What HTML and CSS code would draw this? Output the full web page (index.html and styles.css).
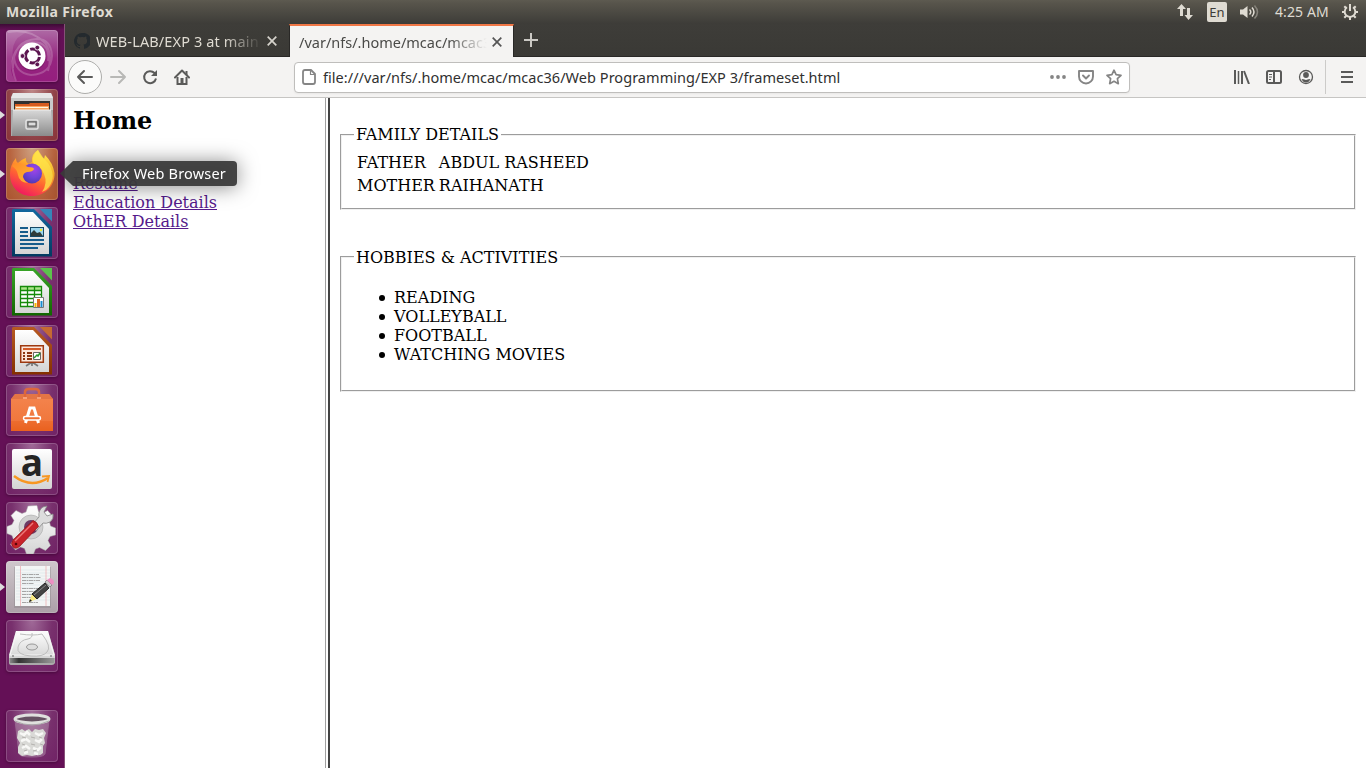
FILE: index.html
```
<!DOCTYPE html>
<html lang="en">
<head>
<meta charset="utf-8">
<title>Mozilla Firefox</title>
<link rel="stylesheet" href="styles.css">
</head>
<body>
<svg width="0" height="0" class="defs">
  <defs>
    <linearGradient id="white" x1="0" y1="0" x2="0" y2="1"><stop offset="0" stop-color="#fff"/><stop offset="1" stop-color="#d4d4d4"/></linearGradient>
    <linearGradient id="metal" x1="0" y1="0" x2="0" y2="1"><stop offset="0" stop-color="#d8d8d8"/><stop offset="1" stop-color="#8b8b8b"/></linearGradient>
    <linearGradient id="dark" x1="0" y1="0" x2="1" y2="0"><stop offset="0" stop-color="#888"/><stop offset=".2" stop-color="#333"/><stop offset="1" stop-color="#999"/></linearGradient>
    <linearGradient id="fox" x1=".8" y1="0" x2=".3" y2="1"><stop offset="0" stop-color="#fff14f"/><stop offset=".35" stop-color="#ffb52a"/><stop offset=".65" stop-color="#ff6432"/><stop offset="1" stop-color="#f01662"/></linearGradient>
    <linearGradient id="foxhead" x1="0" y1="0" x2="1" y2="1"><stop offset="0" stop-color="#ff8a28"/><stop offset="1" stop-color="#ffba31"/></linearGradient>
    <radialGradient id="globe" cx=".6" cy=".3" r=".8"><stop offset="0" stop-color="#a144e8"/><stop offset=".5" stop-color="#7043d8"/><stop offset="1" stop-color="#4b35a8"/></radialGradient>
    <linearGradient id="bag" x1="0" y1="0" x2="0" y2="1"><stop offset="0" stop-color="#f4854f"/><stop offset=".75" stop-color="#f0773c"/><stop offset="1" stop-color="#ea6522"/></linearGradient>
    <linearGradient id="blueDoc" x1="0" y1="0" x2="0" y2="1"><stop offset="0" stop-color="#13689f"/><stop offset="1" stop-color="#023a60"/></linearGradient>
    <linearGradient id="greenDoc" x1="0" y1="0" x2="0" y2="1"><stop offset="0" stop-color="#39a528"/><stop offset="1" stop-color="#116600"/></linearGradient>
    <linearGradient id="brownDoc" x1="0" y1="0" x2="0" y2="1"><stop offset="0" stop-color="#b85a22"/><stop offset="1" stop-color="#843000"/></linearGradient>
  </defs>
</svg>

<header class="panel">
  <span class="panel-title">Mozilla Firefox</span>
  <div class="indicators">
    <svg class="ind-net" width="18" height="18" viewBox="0 0 18 18" fill="#dfdbd2"><path d="M5.500 1 10 6H7v7H4V6H1z"/><path d="M12.500 17 8.500 12H11V5h3v7h3z"/></svg>
    <span class="ind-lang">En</span>
    <svg class="ind-vol" width="20" height="18" viewBox="0 0 20 18" fill="none" stroke="#dfdbd2" stroke-width="1.500"><path d="M0 6.500h3L7.500 3v12L3 11.500H0z" fill="#dfdbd2" stroke="none"/><path d="M9.500 6.500q2.500 2.500 0 5M12 4.500q4 4.500 0 9"/><path d="M14.500 2.500q6 6.500 0 13" stroke="#86837b"/></svg>
    <span class="clock">4:25 AM</span>
    <svg class="ind-gear" width="18" height="18" viewBox="0 0 18 18" fill="none" stroke="#dfdbd2"><path d="M6 4.300a5.300 5.300 0 1 0 6 0" stroke-width="1.900"/><path d="M9 1v7" stroke-width="2"/><path d="M1 9h3M14 9h3M9 14v3M3.300 3.300l2 2M14.700 3.300l-2 2M3.300 14.700l2-2M14.700 14.700l-2-2" stroke-width="2"/></svg>
  </div>
</header>

<div class="desktop">
  <nav class="launcher">
    <div class="tile ubuntu"><svg viewBox="0 0 52 52"><g fill="none" stroke="#fff"><path d="M10 51C1 28 10 8 34 13q10 4 8 18M2 2q23-4 37 11 8 10 3 28M7 38q0-28 24-29 14 0 15 17-1 18-21 19Q9 43 8 26" stroke-opacity=".2" stroke-width="2"/></g><path d="M0 0h36Q3 1 7 28 2 40 9 51H0z" fill="#fff" opacity=".12"/><circle cx="26" cy="27" r="13.800" fill="#581049" opacity=".35"/><circle cx="26" cy="26" r="13.500" fill="#fff"/><circle cx="26.500" cy="26" r="7" fill="none" stroke="#5c1550" stroke-width="3" stroke-dasharray="12.700 2" stroke-dashoffset="-1"/><g fill="#5c1550" stroke="#fff" stroke-width=".8"><circle cx="16.500" cy="26" r="2.400"/><circle cx="31.300" cy="17.600" r="2.400"/><circle cx="31.300" cy="34.400" r="2.400"/></g></svg></div>

    <div class="tile files running"><svg viewBox="0 0 52 52"><path d="M7 4h38l2 4v39H5V8z" fill="#aaa"/><path d="M7 4h38l2 5H5z" fill="#e7e7e7"/><path d="M5 9h42v12H5z" fill="#c9c9c9"/><path d="M8 12h36v9H8z" fill="#303030"/><path d="M9 15h14l1-1h19v7H9z" fill="#d65b20"/><path d="M9 17h34v4H9z" fill="#f9a45e"/><path d="M10 18.500h32" stroke="#fff4df" stroke-width="1"/><path d="M7 21h38l2 26H6z" fill="url(#metal)"/><path d="M7 21h38" stroke="#eee"/><rect x="20" y="31" width="12" height="9" rx="1.500" fill="#999" stroke="#e4e4e4" stroke-width="1.500"/><rect x="22" y="33" width="8" height="4" fill="#ddd" stroke="#555"/></svg></div>

    <div class="tile firefox running"><svg viewBox="0 0 52 52"><path d="M32 2q2 6 6 9l1-4q8 8 9.500 18C49 38 39 48 26 48S4 39 4 26q0-9 6-16 0 4 2 5 4-4 8-5-1 4 3 6l3-2Q25 6 32 2" fill="url(#fox)"/><path d="M32 2q4 7 10 13 9 13 1 24-3 4-7 5 6-9 2-18-3-8-9-9-6-6 3-15" fill="#ffe44a" opacity=".8"/><circle cx="26" cy="25.500" r="10" fill="url(#globe)"/><path d="M6 18q3-4 8-3l8 4q6 0 6 2-1 3-7 3-4 1-4 5 1 4 5 6-9-1-10-8-1-6-6-9" fill="url(#foxhead)"/></svg></div>

    <div class="tile writer"><svg viewBox="0 0 52 52"><path d="M7 2h21l18 18v29.500H6V3z" fill="url(#blueDoc)"/><path d="M34 2h12v12.500z" fill="#3686b8"/><path d="M9 5h18l16 17v25H9z" fill="url(#white)"/><path d="M14 21h8M14 25h8M14 29h8M14 33h24M14 37h24M14 41h18" stroke="#175c8b" stroke-width="2"/><rect x="24.500" y="20.500" width="13" height="9" fill="#9dd7ef" stroke="#174966"/><path d="M25 29v-3l3-3 3 3 3-1 3 4z" fill="#303c3a"/><circle cx="35" cy="23" r="1.200" fill="#f1e82e"/></svg></div>

    <div class="tile calc"><svg viewBox="0 0 52 52"><path d="M7 2h21l18 18v29.500H6V3z" fill="url(#greenDoc)"/><path d="M34 2h12v12.500z" fill="#5cc34c"/><path d="M9 5h18l16 17v25H9z" fill="url(#white)"/><path d="M14.500 20.500h21v20h-21z" fill="#fff"/><path d="M15 21h20v3H15z" fill="#abe58a"/><path d="M14.500 20.500h21v20h-21zM14 24.500h21M14 28.500h21M14 32.500h21M14 36.500h21M21.500 20v20M28.500 20v20" fill="none" stroke="#168a0b" stroke-width="1.300"/><path d="M27.500 31.500h10v10h-10z" fill="#fff" stroke="#777"/><path d="M28.500 37h2v4h-2z" fill="#f4b700"/><path d="M31 33h3v8h-3z" fill="#dd671b"/><path d="M34.500 35h2v6h-2z" fill="#198dd1"/></svg></div>

    <div class="tile impress"><svg viewBox="0 0 52 52"><path d="M7 2h21l18 18v29.500H6V3z" fill="url(#brownDoc)"/><path d="M34 2h12v12.500z" fill="#c56a32"/><path d="M9 5h18l16 17v25H9z" fill="url(#white)"/><path d="m26 37-6 4M26 37l6 4M26 36v5" stroke="#777" stroke-width="1.700"/><path d="M14.700 20.700h22.600v16.600H14.700z" fill="#fce7da" stroke="#9d3910" stroke-width="1.500"/><path d="M17 24h18" stroke="#d35b29" stroke-width="2"/><path d="M17 28h2M17 31h2M17 34h2M21 28h5M21 31h5M21 34h5" stroke="#8c3712" stroke-width="1.800"/><path d="M27.500 27.500h7v7h-7z" fill="#fff" stroke="#666"/><path d="m28 33 3-3 1 1 2-3" fill="none" stroke="#27992c" stroke-width="1.500"/></svg></div>

    <div class="tile software"><svg viewBox="0 0 52 52"><path d="M5 15 9 10h34l4 5v32H5z" fill="url(#bag)"/><path d="M5 15 9 10h34l4 5z" fill="#d96b40" opacity=".6"/><path d="M5 37h42v10H5z" fill="#e85c1c" opacity=".4"/><path d="M19 15V8q0-3 4-3h6q4 0 4 3v7" fill="none" stroke="#dd673c" stroke-width="2.500"/><path d="M17 14h4M31 14h4" stroke="#f8a078" stroke-width="2"/><path d="m19.500 39 4.500-15h4l4.500 15" fill="none" stroke="#fff" stroke-width="3"/><rect x="17.500" y="32.500" width="17" height="3.500" rx="1.700" fill="#ee6e32" stroke="#fff" stroke-width="1.500"/></svg></div>

    <div class="tile amazon"><svg viewBox="0 0 52 52"><rect x="6" y="6" width="40" height="40" rx="2" fill="url(#white)"/><text x="26" y="33" text-anchor="middle" class="amazon-letter">a</text><path d="M8 33q17 13 34 2" fill="none" stroke="#f79722" stroke-width="2.500"/><path d="m36 33.500 7-.5-1.500 6" fill="none" stroke="#f79722" stroke-width="1.800"/></svg></div>

    <div class="tile settings"><svg viewBox="0 0 52 52"><path d="m21 5 9-.5 1.500 6 4 2 5-3 5 5.500-3 6 1 4 5 2v7l-5.500 1.500-2 4 2.500 5-5 5-6-3-4 1.500-2 5h-7l-2-5.500-4-1.500-5 3-5-5.500 3-5-1.500-4-5-2v-7l5-2 2-4-3-5 5-5 6 3 4-1.500z" transform="translate(1 -1)" fill="url(#white)" stroke="#aaa" stroke-width=".5"/><circle cx="25" cy="25" r="12" fill="#d0d0d0" stroke="#aaa" stroke-width=".6"/><circle cx="25" cy="25" r="7" fill="#6c3a65"/><path d="m26 23 7-8q-1-7 4-10l4-1-3 6 3 4 6-2q1 5-3 8-4 2-7 1l-7 8z" fill="#ddd" stroke="#888" stroke-width=".8"/><path d="M27 18.500q4 1 5.500 6L14 44q-4 4-7 1t0-7z" fill="#c8232a" stroke="#8d1015" stroke-width=".7"/><path d="M27 21 9 39" stroke="#ee7777" stroke-width="1.500"/><circle cx="10" cy="42" r="1.300" fill="#5a0507"/></svg></div>

    <div class="tile gedit running"><svg viewBox="0 0 52 52"><path d="M8 6h37v41H8z" fill="#777" opacity=".3"/><path d="M9 5h35v40H9z" fill="#f3f5f5"/><path d="M10 9h34M10 12h34M10 15h34M10 18h34M10 21h34M10 24h34M10 27h34M10 30h34M10 33h34M10 36h34M10 39h34" stroke="#d8e4e8" stroke-width=".6"/><path d="M14.500 5v40M40 5v40" stroke="#ee9aa0" stroke-width=".6"/><path d="M16 13.500h17M16 16.500h19M16 19.500h18M16 22.500h12M16 27.500h20M16 30.500h19M16 33.500h15M16 36.500h12M16 41.500h16" stroke="#a5a5a5" stroke-width="1" stroke-dasharray="4 .5 2 .5"/><path d="m23 41 3-8 5 5z" fill="#f8e982"/><path d="m23 41 1-3 2 2z" fill="#222"/><path d="m26 33 13-11 4 5-12 11z" fill="#444" stroke="#222"/><path d="M28 34 40 24" stroke="#888"/><path d="m39 21 2-2 5 5-2 2z" fill="#ccc" stroke="#555" stroke-width=".5"/><path d="m41 19 3-2q4 1 4 5l-2 2z" fill="#ed8fc3"/></svg></div>

    <div class="tile drive"><svg viewBox="0 0 52 52"><path d="m10 11h32l7 24v8q-1 2-3 2H6q-3 0-3-2v-7z" fill="#aaa"/><path d="m10 11h32l7 24v3H3v-3z" fill="url(#white)"/><path d="m11 12-7 23h44l-7-23z" fill="none" stroke="#f7f7f7"/><path d="M14 14q14 2 22 0 10 13 5 18-4 5-16 4-15-1-13-9 2-7 10-8 5-1 4-6" fill="none" stroke="#bdbdbd"/><ellipse cx="26" cy="27" rx="5.500" ry="3" fill="#ddd" stroke="#999"/><path d="M4 38h44v5H4z" fill="url(#dark)"/><circle cx="7" cy="36" r="1" fill="#888"/><circle cx="45" cy="36" r="1" fill="#888"/></svg></div>

    <div class="tile trash"><svg viewBox="0 0 52 52"><path d="m9 10 4 34q1 3 13 3t13-3l4-34z" fill="#cfbccb" opacity=".35" stroke="#c9bac6"/><path d="m12 21 4-2 3 2 4-2 3 3 3-3 4 1 4-1 3 4-2 5 1 5-2 3v7q-3 3-6 2l-5 1-5-1-5 1-4-3v-6l2-4-3-5z" fill="#d9d9d6"/><path d="m14 23 4 2 3-3 3 3M29 23l4 2 4-2M15 31l5-2 4 3M29 30l4 2 3-3M16 38l4-2 4 3M27 38l5 2 3-3M18 43l4-1M28 43l4 1" fill="none" stroke="#f8f8f6" stroke-width="2.500"/><path d="m16 27 4 1m5-1 4 1m4-1 3 1m-20 6 3 1m6-1 4 1m5-1 3 1M18 41l3-1m6 1 4-1" stroke="#b4b2ae"/><ellipse cx="26" cy="9" rx="17" ry="4" fill="#665162" stroke="#e0e0de" stroke-width="3"/><path d="M9 11q17 8 34 0" fill="none" stroke="#aaa"/></svg></div>
  </nav>

  <main class="browser">
    <div class="tabs">
      <div class="tab">
        <svg class="github" width="16" height="16" viewBox="0 0 16 16" fill="#242a2e"><path d="M8 0a8 8 0 0 0-2.500 15.600c.4.100.5-.2.500-.4V14c-2.200.5-2.700-1-2.700-1-.4-1-.9-1.200-.9-1.200-.7-.5.100-.5.100-.5.800.1 1.200.8 1.200.8.700 1.300 1.900.9 2.300.7.100-.5.300-.9.500-1.100-1.800-.2-3.600-.9-3.600-4 0-.9.300-1.600.8-2.100-.1-.2-.4-1 .1-2.100 0 0 .7-.2 2.200.8a7.700 7.700 0 0 1 4 0c1.500-1 2.200-.8 2.200-.8.400 1.100.2 1.900.1 2.100.5.600.8 1.300.8 2.200 0 3.100-1.900 3.700-3.700 3.900.3.300.6.800.6 1.500v2.200c0 .2.100.5.500.4A8 8 0 0 0 8 0"/></svg>
        <span class="tab-label old-label">WEB-LAB/EXP 3 at main</span>
        <svg class="close" width="10" height="10" viewBox="0 0 10 10" stroke="#d6d3cc" stroke-width="1.700"><path d="m.7.7 8.600 8.600m0-8.600L.7 9.300"/></svg>
      </div>
      <div class="tab active">
        <span class="tab-label new-label">/var/nfs/.home/mcac/mcac36</span>
        <svg class="close" width="10" height="10" viewBox="0 0 10 10" stroke="#555" stroke-width="1.700"><path d="m.7.7 8.600 8.600m0-8.600L.7 9.300"/></svg>
      </div>
      <svg class="plus" width="14" height="14" viewBox="0 0 14 14" stroke="#cbc9c4" stroke-width="2"><path d="M0 7h14M7 0v14"/></svg>
    </div>

    <div class="toolbar">
      <div class="back"><svg width="18" height="16" viewBox="0 0 18 16" fill="none" stroke="#5a5a59" stroke-width="2" stroke-linecap="round" stroke-linejoin="round"><path d="M16 8H2m6-6L2 8l6 6"/></svg></div>
      <svg class="forward" width="18" height="16" viewBox="0 0 18 16" fill="none" stroke="#b8b8b6" stroke-width="2" stroke-linecap="round" stroke-linejoin="round"><path d="M2 8h14m-6-6 6 6-6 6"/></svg>
      <svg class="reload" width="16" height="16" viewBox="0 0 16 16" fill="none" stroke="#5a5a59" stroke-width="2"><path d="M14 9.500A6 6 0 1 1 12.500 4L14 5.500"/><path d="M15 1v6H9z" fill="#5a5a59" stroke="none"/></svg>
      <svg class="home" width="16" height="16" viewBox="0 0 16 16" fill="none" stroke="#5a5a59" stroke-width="2"><path d="m1 8.500 7-7 7 7" stroke-linecap="round" stroke-linejoin="round"/><path d="M3.500 8v7h9V8M12.500 2v4"/><path d="M6.500 9h3v5h-3z" fill="#5a5a59" stroke="none"/></svg>
      <div class="urlbar">
        <svg class="page-icon" width="14" height="16" viewBox="0 0 14 16" fill="none" stroke="#858585" stroke-width="1.800" stroke-linejoin="round"><path d="M3 1h6l4 4v8q0 2-2 2H3q-2 0-2-2V3q0-2 2-2z"/><path d="M8.500 1v4.500H13" stroke-width="1.200"/></svg>
        <span class="url">file:///var/nfs/.home/mcac/mcac36/Web Programming/EXP 3/frameset.html</span>
        <svg class="dots" width="16" height="4" viewBox="0 0 16 4" fill="#858585"><circle cx="2" cy="2" r="1.900"/><circle cx="8" cy="2" r="1.900"/><circle cx="14" cy="2" r="1.900"/></svg>
        <svg class="pocket" width="16" height="15" viewBox="0 0 16 15" fill="none" stroke="#858585" stroke-width="1.900" stroke-linecap="round" stroke-linejoin="round"><path d="M1 1h14v5.500a7 7 0 0 1-14 0z"/><path d="m5 5.500 3 3 3-3"/></svg>
        <svg class="star" width="16" height="16" viewBox="0 0 16 16" fill="none" stroke="#858585" stroke-width="1.700" stroke-linejoin="round"><path d="m8 1.200 2.100 4.500 4.900.6-3.600 3.400.9 5L8 12.300l-4.300 2.400.9-5L1 6.300l4.900-.6z"/></svg>
      </div>
      <svg class="library" width="16" height="14" viewBox="0 0 16 14" stroke="#5a5a59" stroke-width="2"><path d="M1 0v14M8 1v13M10 1l5 13"/><path d="M4.500 1v13" stroke-width="1.500"/></svg>
      <svg class="sidebar-icon" width="16" height="14" viewBox="0 0 16 14" fill="none" stroke="#5a5a59" stroke-width="2"><rect x="1" y="1" width="14" height="12" rx="1.500"/><path d="M8 1v12"/><path d="M3 4.500h3M3 7h3M3 9.500h2" stroke-width="1"/></svg>
      <svg class="account" width="16" height="16" viewBox="0 0 16 16" fill="#5a5a59"><circle cx="8" cy="8" r="6.500" fill="none" stroke="#5a5a59" stroke-width="1.300"/><circle cx="8" cy="6" r="2.900"/><path d="M3.500 10q2 0 4.500 1 2.500-1 4.500-1-1.500 3.500-4.500 3.500T3.500 10"/></svg>
      <div class="divider"></div>
      <svg class="burger" width="12" height="12" viewBox="0 0 12 12" stroke="#5a5a59" stroke-width="2"><path d="M0 1h12M0 6h12M0 11h12"/></svg>
    </div>

    <div class="frames">
      <section class="frame-nav">
        <h2>Home</h2>
        <a>Resume</a><a>Education Details</a><a>OthER Details</a>
      </section>
      <div class="frame-split"></div>
      <section class="frame-main">
        <fieldset>
          <legend>FAMILY DETAILS</legend>
          <table><tr><td>FATHER</td><td>ABDUL RASHEED</td></tr><tr><td>MOTHER</td><td>RAIHANATH</td></tr></table>
        </fieldset>
        <fieldset class="hobbies">
          <legend>HOBBIES &amp; ACTIVITIES</legend>
          <ul><li>READING</li><li>VOLLEYBALL</li><li>FOOTBALL</li><li>WATCHING MOVIES</li></ul>
        </fieldset>
      </section>
    </div>
  </main>
</div>
<div class="tooltip"><span>Firefox Web Browser</span></div>
</body>
</html>
```
FILE: styles.css
```
* { box-sizing: border-box; }
body { margin: 0; width: 1366px; height: 768px; overflow: hidden; display: flex; flex-direction: column; font-family: "Noto Sans", sans-serif; }
svg { display: block; flex: none; }
.defs { position: absolute; }
.panel { height: 24px; flex: none; display: flex; justify-content: space-between; align-items: center; padding: 0 7px 0 6px; background: linear-gradient(#5d5a50, #57544b 15%, #3d3c38); color: #dfdbd2; font-size: 14px; line-height: 24px; }
.panel-title { font-weight: 700; letter-spacing: .38px; white-space: nowrap; }
.indicators { display: flex; align-items: center; }
.ind-net { margin-right: 13px; }
.ind-lang { width: 20px; height: 20px; border-radius: 2px; background: #dfdbd2; color: #3d3c38; text-align: center; line-height: 20px; font-size: 13px; margin-right: 13px; }
.ind-vol { margin-right: 15px; }
.clock { width: 54px; margin-right: 12px; white-space: nowrap; letter-spacing: .1px; }
.desktop { height: 744px; display: flex; }
.launcher { width: 65px; flex: none; display: flex; flex-direction: column; gap: 7px; padding: 6px 7px 6px 6px; background: linear-gradient(#3d0b36, #641056 6px, #641056); border-right: 1px solid #865078; }
.tile { position: relative; width: 52px; height: 52px; flex: none; border-radius: 4px; background: radial-gradient(ellipse at 50% 0, #a06a98, #78306d 55%, #702265); box-shadow: inset 0 0 0 1px rgba(255,255,255,.18), 0 1px 3px rgba(30,0,25,.4); }
.tile svg { width: 52px; height: 52px; }
.ubuntu { background: linear-gradient(#ae6aa5, #95257f 55%, #951e7e); overflow: hidden; }
.files { background: radial-gradient(ellipse at 50% 0, #be8888, #914449 60%, #893338); }
.firefox { background: radial-gradient(ellipse at 50% 0, #cda080, #b8643f 60%, #a9532f); }
.gedit { background: linear-gradient(#cfc7cc, #aca0a8); }
.running::before { content: ""; position: absolute; left: -6px; top: 22px; border: 4px solid transparent; border-left: 5px solid #ddd; border-right: 0; }
.trash { margin-top: auto; }
.amazon-letter { font: 700 37px "Open Sans", sans-serif; fill: #242424; }

.browser { width: 1301px; display: flex; flex-direction: column; background: #fff; }
.tabs { height: 33px; flex: none; display: flex; background: linear-gradient(#3e3d39, #3a3935); border-bottom: 1px solid #292826; font-size: 14.500px; }
.tab { height: 32px; width: 224px; display: flex; align-items: center; padding: 2px 12px 0 9px; color: #dfdbd2; }
.active { height: 33px; width: 225px; padding: 0 11px 0 9px; background: #f4f3f2; border-top: 2px solid #f07746; border-left: 1px solid #292826; border-right: 1px solid #292826; color: #4a4a48; }
.github { margin-right: 6px; }
.tab-label { overflow: hidden; white-space: nowrap; }
.old-label { width: 164px; margin-right: 7px; letter-spacing: .13px; -webkit-mask-image: linear-gradient(90deg, #000 128px, transparent 166px); }
.new-label { width: 188px; margin-right: 5px; -webkit-mask-image: linear-gradient(90deg, #000 150px, transparent 188px); }
.plus { margin: 9px 0 0 10px; }
.toolbar { height: 41px; flex: none; display: flex; align-items: center; background: #f4f3f2; border-bottom: 1px solid #c6c5c3; padding-left: 3px; }
.back { width: 34px; height: 34px; border: 1px solid #adadab; border-radius: 50%; background: #fbfbfa; display: flex; justify-content: center; align-items: center; }
.forward { margin-left: 7px; }
.reload { margin-left: 15px; }
.home { margin-left: 16px; }
.urlbar { width: 836px; height: 31px; margin-left: 104px; display: flex; align-items: center; padding: 0 7px; background: #fff; border: 1px solid #bfbebc; border-radius: 4px; box-shadow: 0 1px 2px rgba(0,0,0,.05); font-size: 14.500px; color: #303030; }
.url { width: 728px; margin-left: 7px; letter-spacing: .04px; white-space: nowrap; }
.pocket { margin-left: 12px; }
.star { margin-left: 12px; }
.library { margin-left: 104px; }
.sidebar-icon { margin-left: 16px; }
.account { margin-left: 16px; }
.divider { width: 1px; height: 34px; margin-left: 11px; background: #cccbc9; }
.burger { margin-left: 15px; }

.frames { height: 670px; display: flex; font-family: "DejaVu Serif", serif; font-size: 16px; line-height: 19px; color: #000; }
.frame-nav { width: 260px; padding: 9px 8px 8px; display: flex; flex-direction: column; align-items: flex-start; }
h2 { margin: 0 0 39px; font-size: 24px; line-height: 28px; }
.frame-nav a { color: #551a8b; text-decoration: underline; }
.frame-split { width: 5px; border-left: 1px solid #a0a0a0; border-right: 2px solid #444; }
.frame-main { width: 1036px; padding: 27px 8px 0; }
fieldset { margin: 0 2px; padding: 5.600px 12px 10px; border: 2px groove #f0f0f0; height: 85px; }
legend { padding: 0 2px; height: 19px; }
table { border-spacing: 2px; }
td { padding: 1px; }
.hobbies { margin-top: 38px; height: 144px; padding-top: 7.600px; }
.hobbies legend { height: 17px; }
ul { margin: 15px 0; padding-left: 40px; list-style: none; }
li { position: relative; }
li::before { content: ""; position: absolute; left: -15px; top: 7px; width: 6px; height: 6px; border-radius: 50%; background: #000; }

.tooltip { position: absolute; left: 60px; top: 161px; width: 177px; height: 25px; filter: drop-shadow(0 1px 10px rgba(0,0,0,.5)); }
.tooltip span { display: block; height: 25px; padding-left: 22px; border-radius: 4px; background: rgba(58,58,58,.94); clip-path: polygon(0 50%, 13px 0, 100% 0, 100% 100%, 13px 100%); color: #fff; font-size: 14.500px; letter-spacing: .2px; line-height: 25px; white-space: nowrap; }
```
